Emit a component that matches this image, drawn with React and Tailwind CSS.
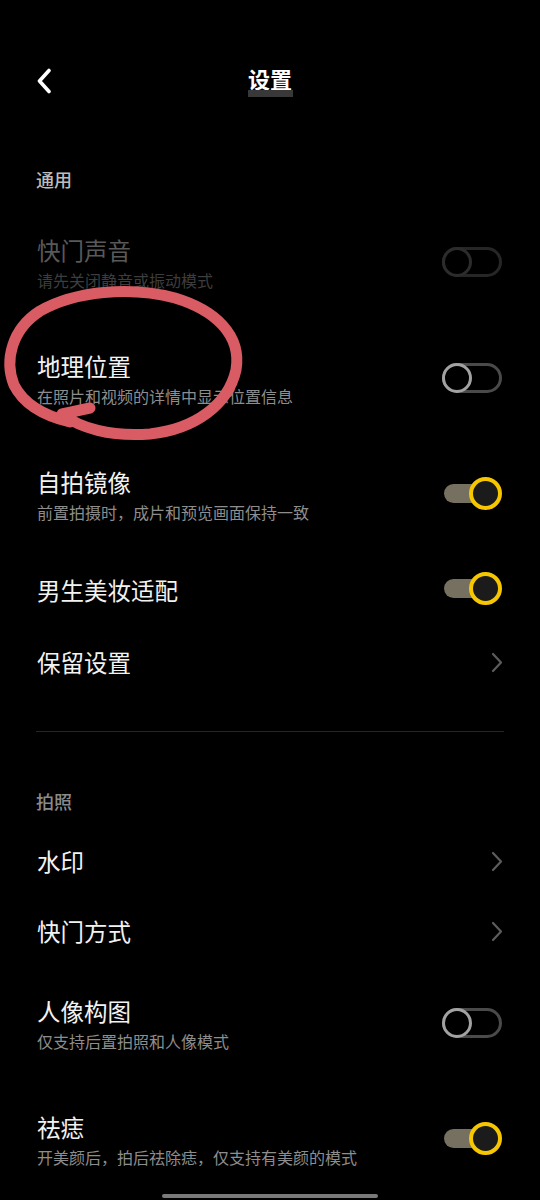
import React from 'react';

const FONT = { fontFamily: '"Noto Sans CJK SC", "Noto Sans", sans-serif' };

function Toggle({ on, disabled }) {
  if (on) {
    return (
      <div className="relative w-[58px] h-[33px] shrink-0 -mt-[3px]">
        <div className="absolute left-0 top-[7px] w-[44px] h-[19px] rounded-full bg-[#767060]" />
        <div className="absolute right-0 top-0 w-[33px] h-[33px] rounded-full border-[4px] border-[#f6c700] bg-[#1b1b1b]" />
      </div>
    );
  }
  const track = disabled ? 'border-[#262626]' : 'border-[#4a4a4a]';
  const knob = disabled ? 'border-[#2c2c2c]' : 'border-[#a2a2a2]';
  return (
    <div className={`relative w-[60px] h-[30px] shrink-0 -mt-[3px] rounded-full border-[3px] ${track}`}>
      <div className={`absolute -left-[3px] -top-[3px] w-[30px] h-[30px] rounded-full border-[3px] bg-black ${knob}`} />
    </div>
  );
}

function Chevron() {
  return (
    <svg width="12" height="21" viewBox="0 0 12 21" className="shrink-0 mr-[-1px]">
      <path d="M2 2 L10 10.5 L2 19" fill="none" stroke="#5c5c5c" strokeWidth="2.2" strokeLinecap="round" strokeLinejoin="round" />
    </svg>
  );
}

function SwitchRow({ title, sub, on, disabled }) {
  return (
    <div className="h-[116px] flex items-center justify-between pl-[37px] pr-[38px]">
      <div className="flex flex-col">
        <div className={`h-[32px] leading-[30px] text-[23.5px] ${disabled ? 'text-[#595959]' : 'text-[#f2f2f2]'}`}>{title}</div>
        <div className={`mt-[2px] h-[22px] leading-[22px] text-[16px] ${disabled ? 'text-[#3d3d3d]' : 'text-[#8d8d8d]'}`}>{sub}</div>
      </div>
      <Toggle on={on} disabled={disabled} />
    </div>
  );
}

function SimpleRow({ title, h = 'h-[72px]', toggle, on }) {
  return (
    <div className={`${h} flex items-center justify-between pl-[37px] pr-[38px]`}>
      <div className="text-[23.5px] leading-[30px] text-[#f2f2f2]">{title}</div>
      {toggle ? <Toggle on={on} /> : <Chevron />}
    </div>
  );
}

export default function App() {
  return (
    <div className="relative w-[540px] h-[1200px] overflow-hidden bg-black" style={FONT}>
      {/* top bar */}
      <div className="h-[120px] pt-[40px] flex items-center relative">
        <div className="absolute left-[36px] top-[68px]">
          <svg width="16" height="26" viewBox="0 0 16 26">
            <path d="M13 2.5 L3.5 13 L13 23.5" fill="none" stroke="#ffffff" strokeWidth="3.6" strokeLinecap="round" strokeLinejoin="round" />
          </svg>
        </div>
        <div className="w-full flex justify-center">
          <div className="flex flex-col items-center">
            <div className="text-[22px] leading-[28px] font-bold text-white">设置</div>
            <div className="w-[45px] h-[7px] bg-[#383838] -mt-[2px]" />
          </div>
        </div>
      </div>

      <div className="mt-[46px] mb-[13px] h-[26px] leading-[26px] pl-[36px] text-[18px] font-medium text-[#bdbdbd]">通用</div>

      <SwitchRow title="快门声音" sub="请先关闭静音或振动模式" disabled />
      <SwitchRow title="地理位置" sub="在照片和视频的详情中显示位置信息" />
      <SwitchRow title="自拍镜像" sub="前置拍摄时，成片和预览画面保持一致" on />
      <SimpleRow title="男生美妆适配" h="h-[73px]" toggle on />
      <SimpleRow title="保留设置" />

      <div className="mt-[33px] mx-[36px] h-px bg-[#262626]" />

      <div className="mt-[56px] mb-[12px] h-[26px] leading-[26px] pl-[36px] text-[18px] font-medium text-[#8a8a8a]">拍照</div>

      <SimpleRow title="水印" h="h-[70px]" />
      <SimpleRow title="快门方式" h="h-[70px]" />
      <SwitchRow title="人像构图" sub="仅支持后置拍照和人像模式" />
      <SwitchRow title="祛痣" sub="开美颜后，拍后祛除痣，仅支持有美颜的模式" on />

      {/* hand-drawn annotation */}
      <svg className="absolute left-0 top-0 pointer-events-none" width="540" height="1200" viewBox="0 0 540 1200">
        <path
          d="M90 408 L62 414 C 80 428, 110 437, 150 434 C 195 429, 228 405, 236 370 C 242 335, 215 310, 175 298 C 130 286, 75 291, 40 311 C 12 329, 4 360, 14 385 C 24 405, 45 416, 70 422"
          fill="none"
          stroke="#d95b64"
          strokeWidth="11"
          strokeLinecap="round"
          strokeLinejoin="round"
        />
      </svg>

      {/* home indicator */}
      <div className="absolute bottom-[2px] left-[162px] w-[216px] h-[4px] rounded-full bg-[#7a7a7a]" />
    </div>
  );
}
